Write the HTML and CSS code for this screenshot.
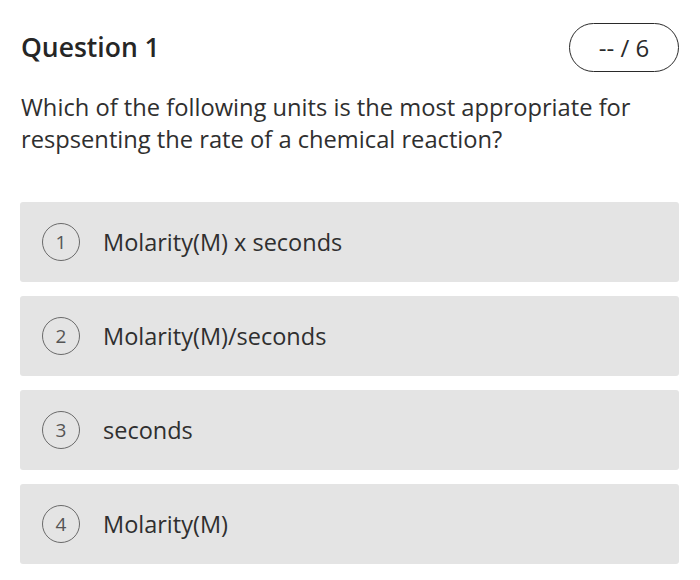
FILE: index.html
```html
<!DOCTYPE html>
<html>
<head>
<meta charset="utf-8">
<link rel="stylesheet" href="styles.css">
</head>
<body>
<div class="page">
  <div class="header">
    <h1 class="title">Question 1</h1>
    <div class="score">-- / 6</div>
  </div>
  <p class="question">Which of the following units is the most appropriate for respsenting the rate of a chemical reaction?</p>
  <div class="options">
    <div class="option"><span class="num">1</span><span class="label">Molarity(M) x seconds</span></div>
    <div class="option"><span class="num">2</span><span class="label">Molarity(M)/seconds</span></div>
    <div class="option"><span class="num">3</span><span class="label">seconds</span></div>
    <div class="option"><span class="num">4</span><span class="label">Molarity(M)</span></div>
  </div>
</div>
</body>
</html>
```

FILE: styles.css
```css
html, body {
  margin: 0;
  padding: 0;
  background: #ffffff;
}
body {
  font-family: "Open Sans", "Noto Sans", sans-serif;
  color: #333333;
}
.page {
  padding: 23px 21px 0 20px;
}
.header {
  display: flex;
  justify-content: space-between;
  align-items: center;
}
.title {
  margin: 0 0 0 1px;
  font-size: 26.5px;
  font-weight: 600;
  color: #262626;
  line-height: 49px;
}
.score {
  box-sizing: border-box;
  width: 110px;
  height: 49px;
  border: 1.5px solid #2a2a2a;
  border-radius: 25px;
  display: flex;
  align-items: center;
  justify-content: center;
  font-size: 24px;
  color: #2a2a2a;
}
.question {
  margin: 19px 0 0 1px;
  font-size: 23.7px;
  line-height: 32px;
  color: #2f2f2f;
}
.options {
  margin-top: 47px;
  display: flex;
  flex-direction: column;
  gap: 14px;
}
.option {
  height: 80px;
  background: #e4e4e4;
  border-radius: 3px;
  display: flex;
  align-items: center;
  padding-left: 22px;
}
.num {
  box-sizing: border-box;
  width: 38px;
  height: 38px;
  border: 1.5px solid #6a6a6a;
  border-radius: 50%;
  display: flex;
  align-items: center;
  justify-content: center;
  font-size: 19px;
  color: #555555;
  flex-shrink: 0;
}
.label {
  margin-left: 23px;
  font-size: 23.5px;
  color: #2f2f2f;
}
```
